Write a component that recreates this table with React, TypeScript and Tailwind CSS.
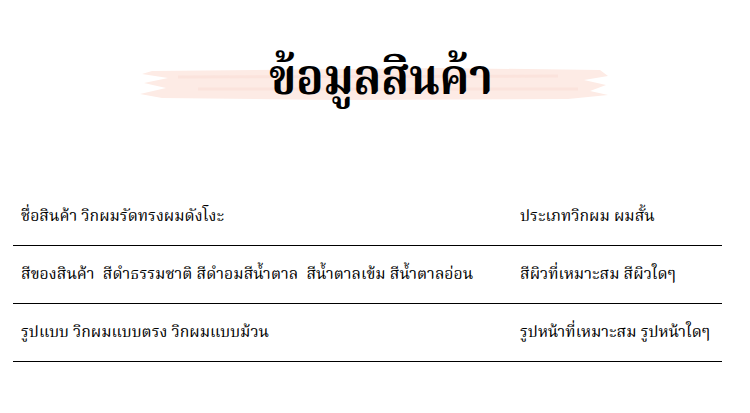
export default function App() {
  const rows = [
    ["ชื่อสินค้า วิกผมรัดทรงผมดังโงะ", "ประเภทวิกผม ผมสั้น"],
    ["สีของสินค้า  สีดำธรรมชาติ สีดำอมสีน้ำตาล  สีน้ำตาลเข้ม สีน้ำตาลอ่อน", "สีผิวที่เหมาะสม สีผิวใดๆ"],
    ["รูปแบบ วิกผมแบบตรง วิกผมแบบม้วน", "รูปหน้าที่เหมาะสม รูปหน้าใดๆ"],
  ];
  return (
    <div
      className="h-[413px] w-[750px] bg-white text-black"
      style={{ fontFamily: '"Noto Serif Thai", "Noto Sans Thai Looped", "TH Sarabun New", Garuda, Loma, "Liberation Serif", serif' }}
    >
      <div className="relative flex h-[130px] items-start justify-center pt-[56px]">
        <svg className="absolute left-[138px] top-[65px]" width="472" height="36" viewBox="0 0 472 36">
          <path d="M14 6 L300 3 L462 5 L470 11 L446 15 L468 20 L452 26 L470 30 L430 34 L200 35 L24 33 L2 29 L28 23 L6 18 L30 13 L4 9 Z" fill="#fdebe5" />
          <path d="M40 12 L420 11 M60 24 L440 24" stroke="#fbe3dc" strokeWidth="3" />
        </svg>
        <h1 className="relative ml-[12px] origin-top scale-y-[1.12] text-[45px] font-bold leading-none">ข้อมูลสินค้า</h1>
      </div>
      <div className="mx-[13px] mt-[58px] w-[709px]">
        {rows.map((r, i) => (
          <div key={i} className="flex h-[58px] items-center border-b border-black text-[15.8px]">
            <div className="w-[507px] whitespace-pre pl-[8px]">{r[0]}</div>
            <div className="whitespace-pre">{r[1]}</div>
          </div>
        ))}
      </div>
    </div>
  );
}
